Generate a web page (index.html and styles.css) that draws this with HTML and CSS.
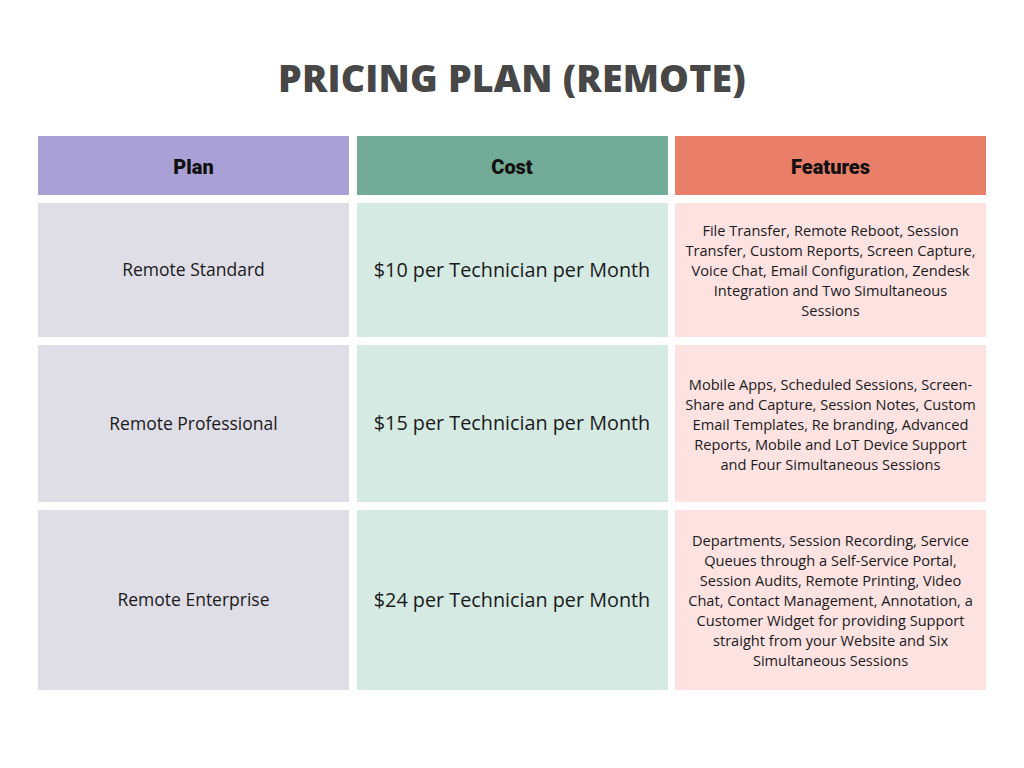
FILE: index.html
```html
<!DOCTYPE html>
<html lang="en">
<head>
<meta charset="utf-8">
<title>Pricing Plan (Remote)</title>
<link rel="stylesheet" href="styles.css">
</head>
<body>
<main class="page">
  <h1 class="title">PRICING PLAN (REMOTE)</h1>
  <div class="table">
    <div class="cell head head-plan">Plan</div>
    <div class="cell head head-cost">Cost</div>
    <div class="cell head head-feat">Features</div>

    <div class="cell plan">Remote Standard</div>
    <div class="cell cost">$10 per Technician per Month</div>
    <div class="cell feat">File Transfer, Remote Reboot, Session<br>Transfer, Custom Reports, Screen Capture,<br>Voice Chat, Email Configuration, Zendesk<br>Integration and Two Simultaneous<br>Sessions</div>

    <div class="cell plan">Remote Professional</div>
    <div class="cell cost">$15 per Technician per Month</div>
    <div class="cell feat">Mobile Apps, Scheduled Sessions, Screen-<br>Share and Capture, Session Notes, Custom<br>Email Templates, Re branding, Advanced<br>Reports, Mobile and LoT Device Support<br>and Four Simultaneous Sessions</div>

    <div class="cell plan">Remote Enterprise</div>
    <div class="cell cost">$24 per Technician per Month</div>
    <div class="cell feat">Departments, Session Recording, Service<br>Queues through a Self-Service Portal,<br>Session Audits, Remote Printing, Video<br>Chat, Contact Management, Annotation, a<br>Customer Widget for providing Support<br>straight from your Website and Six<br>Simultaneous Sessions</div>
  </div>
</main>
</body>
</html>
```

FILE: styles.css
```css
* { box-sizing: border-box; }
html, body { margin: 0; padding: 0; background: #ffffff; }
body {
  width: 1024px;
  height: 768px;
  font-family: "Open Sans", "Noto Sans", sans-serif;
  color: #1a1a1a;
}
.page {
  padding: 56px 38px 0 38px;
}
.title {
  margin: 0;
  height: 80px;
  text-align: center;
  font-family: "Open Sans", sans-serif;
  font-weight: 800;
  font-size: 37.5px;
  line-height: 44px;
  color: #474747;
  letter-spacing: 0.2px;
}
.table {
  display: grid;
  grid-template-columns: 311px 311px 311px;
  grid-template-rows: 59px 134px 157px 180px;
  column-gap: 7.5px;
  row-gap: 8px;
}
.cell {
  display: flex;
  align-items: center;
  justify-content: center;
  text-align: center;
}
.head {
  font-family: "Roboto", sans-serif;
  font-weight: 900;
  font-size: 20px;
  color: #111111;
  padding-top: 2px;
}
.head-plan { background: #a9a1d5; }
.head-cost { background: #72ab97; }
.head-feat { background: #e97e69; }
.plan {
  background: #dfdde6;
  font-size: 17.5px;
  padding-bottom: 2px;
}
.cost {
  background: #d4eae3;
  font-size: 19.8px;
  padding-bottom: 2px;
}
.feat {
  background: #fde2e2;
  font-size: 14.6px;
  line-height: 20px;
}
```
